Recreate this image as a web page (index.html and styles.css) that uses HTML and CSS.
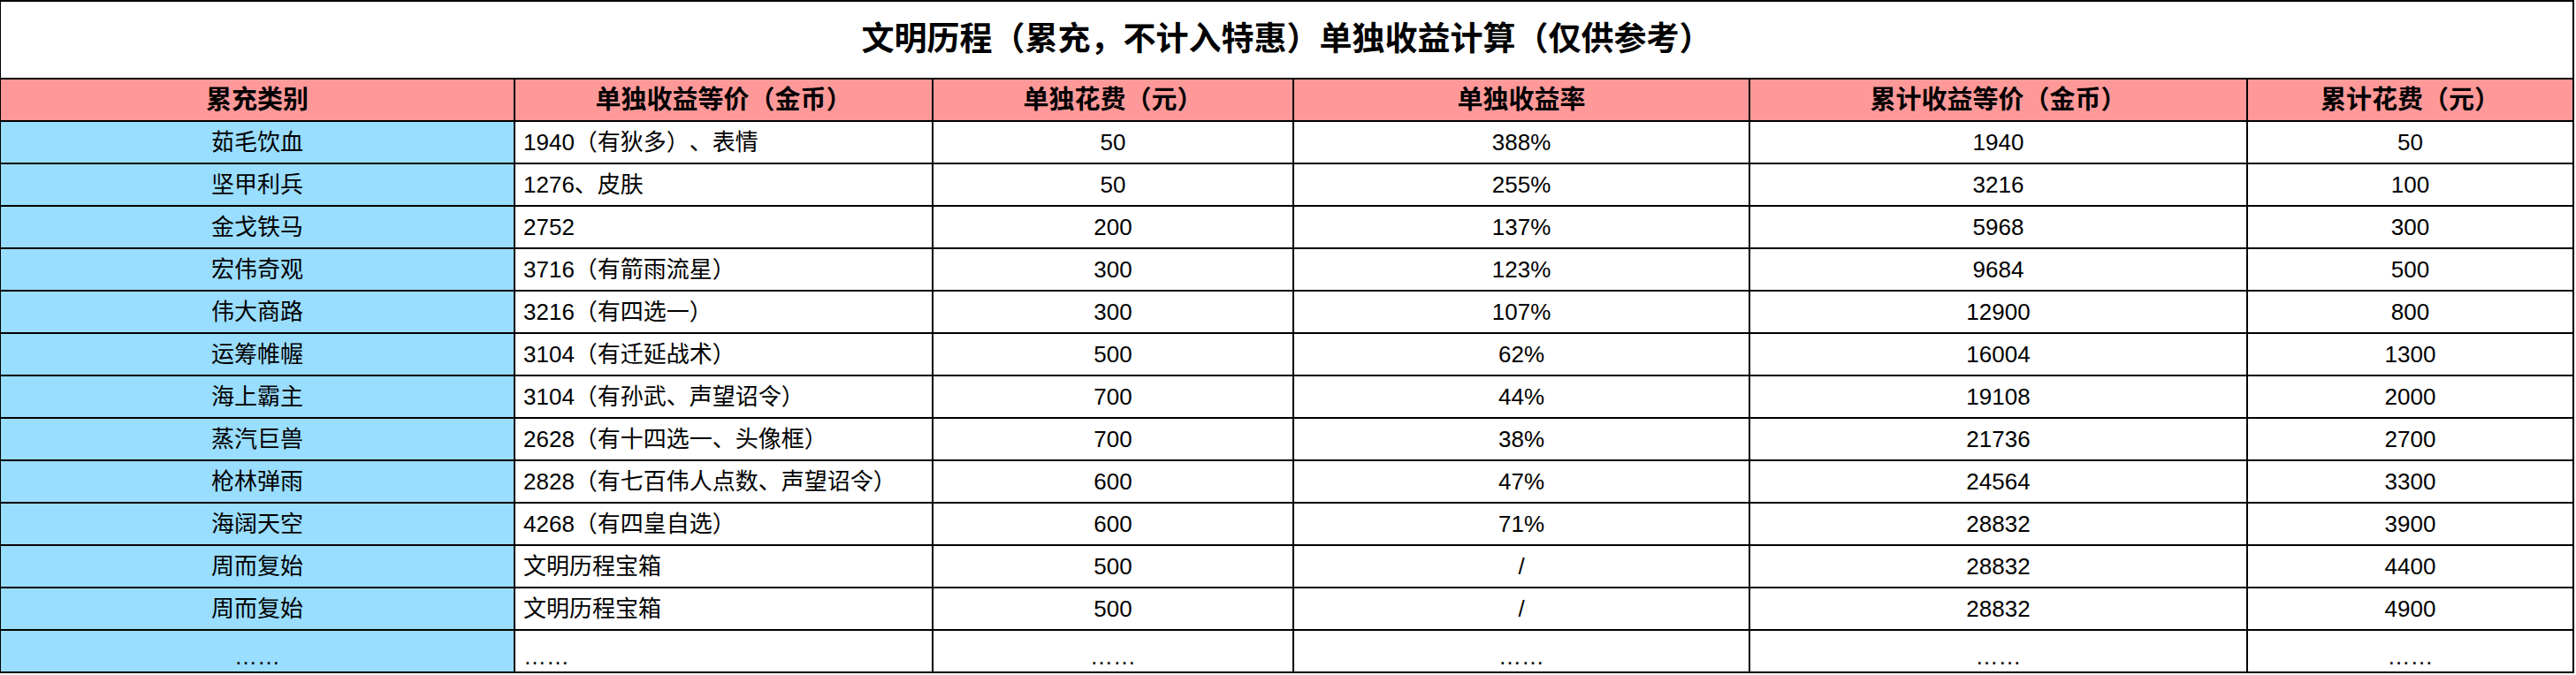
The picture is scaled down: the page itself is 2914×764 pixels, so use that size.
FILE: index.html
```html
<!DOCTYPE html>
<html lang="zh-CN">
<head>
<meta charset="utf-8">
<title>文明历程单独收益计算</title>
<link rel="stylesheet" href="styles.css">
</head>
<body>
<table class="sheet">
  <colgroup>
    <col class="c1"><col class="c2"><col class="c3"><col class="c4"><col class="c5"><col class="c6">
  </colgroup>
  <tr class="title-row"><td colspan="6" class="title">文明历程（累充，不计入特惠）单独收益计算（仅供参考）</td></tr>
  <tr class="head-row">
    <th>累充类别</th><th>单独收益等价（金币）</th><th>单独花费（元）</th><th>单独收益率</th><th>累计收益等价（金币）</th><th>累计花费（元）</th>
  </tr>
  <tr class="r1"><td class="cat">茹毛饮血</td><td class="desc">1940（有狄多）、表情</td><td>50</td><td>388%</td><td>1940</td><td class="last">50</td></tr>
  <tr class="r2"><td class="cat">坚甲利兵</td><td class="desc">1276、皮肤</td><td>50</td><td>255%</td><td>3216</td><td class="last">100</td></tr>
  <tr class="r3"><td class="cat">金戈铁马</td><td class="desc">2752</td><td>200</td><td>137%</td><td>5968</td><td class="last">300</td></tr>
  <tr class="r4"><td class="cat">宏伟奇观</td><td class="desc">3716（有箭雨流星）</td><td>300</td><td>123%</td><td>9684</td><td class="last">500</td></tr>
  <tr class="r5"><td class="cat">伟大商路</td><td class="desc">3216（有四选一）</td><td>300</td><td>107%</td><td>12900</td><td class="last">800</td></tr>
  <tr class="r6"><td class="cat">运筹帷幄</td><td class="desc">3104（有迁延战术）</td><td>500</td><td>62%</td><td>16004</td><td class="last">1300</td></tr>
  <tr class="r7"><td class="cat">海上霸主</td><td class="desc">3104（有孙武、声望诏令）</td><td>700</td><td>44%</td><td>19108</td><td class="last">2000</td></tr>
  <tr class="r8"><td class="cat">蒸汽巨兽</td><td class="desc">2628（有十四选一、头像框）</td><td>700</td><td>38%</td><td>21736</td><td class="last">2700</td></tr>
  <tr class="r9"><td class="cat">枪林弹雨</td><td class="desc">2828（有七百伟人点数、声望诏令）</td><td>600</td><td>47%</td><td>24564</td><td class="last">3300</td></tr>
  <tr class="r10"><td class="cat">海阔天空</td><td class="desc">4268（有四皇自选）</td><td>600</td><td>71%</td><td>28832</td><td class="last">3900</td></tr>
  <tr class="r11"><td class="cat">周而复始</td><td class="desc">文明历程宝箱</td><td>500</td><td>/</td><td>28832</td><td class="last">4400</td></tr>
  <tr class="r12"><td class="cat">周而复始</td><td class="desc">文明历程宝箱</td><td>500</td><td>/</td><td>28832</td><td class="last">4900</td></tr>
  <tr class="more-row"><td class="cat">……</td><td class="desc">……</td><td>……</td><td>……</td><td>……</td><td class="last">……</td></tr>
</table>
</body>
</html>
```

FILE: styles.css
```css
html, body {
  margin: 0;
  padding: 0;
  background: #ffffff;
}

body {
  width: 2914px;
  height: 764px;
  overflow: hidden;
  font-family: "Liberation Sans", "Noto Sans CJK SC", sans-serif;
  color: #000;
  text-spacing-trim: space-all;
}

.sheet {
  border-collapse: collapse;
  table-layout: fixed;
  width: 2911px;
  margin-left: -1px;
}

.c1 { width: 582px; }
.c2 { width: 473px; }
.c3 { width: 408px; }
.c4 { width: 516px; }
.c5 { width: 563px; }
.c6 { width: 369px; }

.sheet td,
.sheet th {
  border: 2px solid #000;
  padding: 0;
  text-align: center;
  vertical-align: middle;
  height: 46px;
  font-size: 26px;
  line-height: 30px;
  font-weight: 400;
  white-space: nowrap;
  overflow: hidden;
  text-spacing-trim: space-all;
}

.sheet .title {
  height: 86px;
  font-size: 37px;
  line-height: 44px;
  font-weight: 700;
  background: #fff;
}

.head-row th {
  background: #ff9999;
  font-size: 29px;
  font-weight: 700;
}

.sheet .cat {
  background: #99ddff;
}

.sheet .desc {
  text-align: left;
  padding-left: 9px;
}

/* first and last columns sit a little lower row by row, as in the sheet */
.sheet tr { --d: 0px; }
.r2, .r3 { --d: 1px; }
.r4, .r5 { --d: 2px; }
.r6, .r7 { --d: 3px; }
.r8, .r9 { --d: 4px; }
.r10 { --d: 5px; }
.r11, .r12 { --d: 6px; }

.sheet .cat,
.sheet .last {
  vertical-align: top;
  padding-top: calc(8px + var(--d));
  height: calc(38px - var(--d));
}

.sheet .more-row td {
  vertical-align: bottom;
  padding-top: 0;
  padding-bottom: 2px;
  height: 44px;
}
```
